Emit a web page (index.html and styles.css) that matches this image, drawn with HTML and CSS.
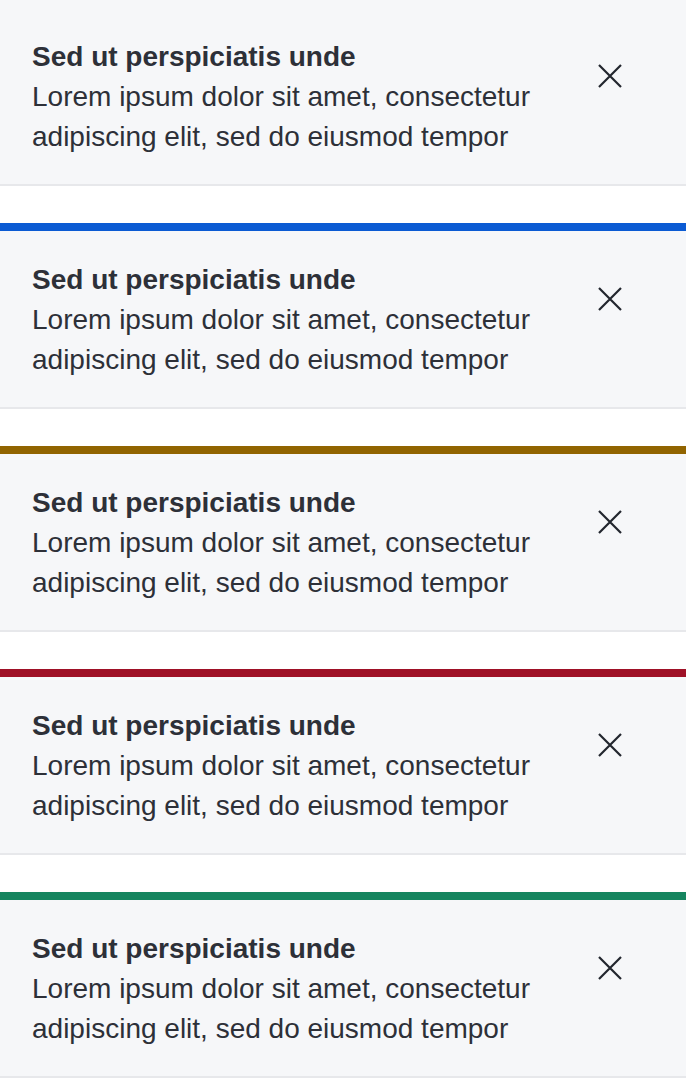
FILE: index.html
```html
<!DOCTYPE html>
<html lang="en">
<head>
<meta charset="utf-8">
<title>Notifications</title>
<link rel="stylesheet" href="styles.css">
</head>
<body>
<div class="stack">
  <div class="note note-plain">
    <div class="note-body">
      <div class="note-title">Sed ut perspiciatis unde</div>
      <div class="note-text">Lorem ipsum dolor sit amet, consectetur adipiscing elit, sed do eiusmod tempor</div>
    </div>
    <button class="note-close" aria-label="Close"><svg viewBox="0 0 24 24" width="24" height="24"><path d="M1 1L23 23M23 1L1 23" stroke="#22262e" stroke-width="2.2" fill="none"/></svg></button>
  </div>
  <div class="note note-info">
    <div class="note-body">
      <div class="note-title">Sed ut perspiciatis unde</div>
      <div class="note-text">Lorem ipsum dolor sit amet, consectetur adipiscing elit, sed do eiusmod tempor</div>
    </div>
    <button class="note-close" aria-label="Close"><svg viewBox="0 0 24 24" width="24" height="24"><path d="M1 1L23 23M23 1L1 23" stroke="#22262e" stroke-width="2.2" fill="none"/></svg></button>
  </div>
  <div class="note note-warning">
    <div class="note-body">
      <div class="note-title">Sed ut perspiciatis unde</div>
      <div class="note-text">Lorem ipsum dolor sit amet, consectetur adipiscing elit, sed do eiusmod tempor</div>
    </div>
    <button class="note-close" aria-label="Close"><svg viewBox="0 0 24 24" width="24" height="24"><path d="M1 1L23 23M23 1L1 23" stroke="#22262e" stroke-width="2.2" fill="none"/></svg></button>
  </div>
  <div class="note note-error">
    <div class="note-body">
      <div class="note-title">Sed ut perspiciatis unde</div>
      <div class="note-text">Lorem ipsum dolor sit amet, consectetur adipiscing elit, sed do eiusmod tempor</div>
    </div>
    <button class="note-close" aria-label="Close"><svg viewBox="0 0 24 24" width="24" height="24"><path d="M1 1L23 23M23 1L1 23" stroke="#22262e" stroke-width="2.2" fill="none"/></svg></button>
  </div>
  <div class="note note-success">
    <div class="note-body">
      <div class="note-title">Sed ut perspiciatis unde</div>
      <div class="note-text">Lorem ipsum dolor sit amet, consectetur adipiscing elit, sed do eiusmod tempor</div>
    </div>
    <button class="note-close" aria-label="Close"><svg viewBox="0 0 24 24" width="24" height="24"><path d="M1 1L23 23M23 1L1 23" stroke="#22262e" stroke-width="2.2" fill="none"/></svg></button>
  </div>
</div>
</body>
</html>
```
FILE: styles.css
```css
html, body {
  margin: 0;
  padding: 0;
  background: #ffffff;
}
body {
  font-family: "Liberation Sans", Arial, sans-serif;
  color: #2d3038;
}
.stack {
  display: flex;
  flex-direction: column;
  gap: 37px;
}
.note {
  display: flex;
  align-items: flex-start;
  background: #f6f7f9;
  border-top: 8px solid #f6f7f9;
  border-bottom: 2px solid #e7e8eb;
  padding: 29px 0 27px 32px;
  box-sizing: border-box;
  height: 186px;
}
.note-info { border-top-color: #0b5bd3; }
.note-warning { border-top-color: #916400; }
.note-error { border-top-color: #9f1127; }
.note-success { border-top-color: #16855f; }
.note-body {
  flex: 1;
  min-width: 0;
}
.note-title {
  font-size: 28px;
  line-height: 40px;
  font-weight: 700;
}
.note-text {
  font-size: 28px;
  line-height: 40px;
  font-weight: 400;
}
.note-close {
  flex: none;
  width: 48px;
  height: 48px;
  margin: 15px 52px 0 0;
  padding: 0;
  border: 0;
  background: transparent;
  display: flex;
  align-items: center;
  justify-content: center;
}
.note-close svg { display: block; }
```
